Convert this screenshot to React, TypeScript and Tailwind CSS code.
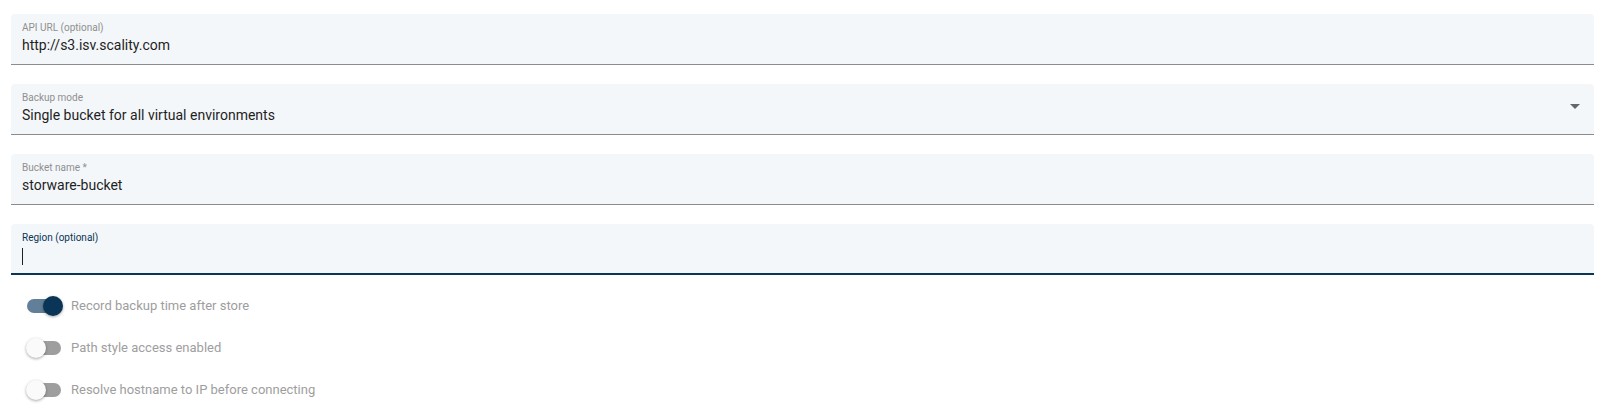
import React from "react";

function Field({
  label,
  value,
  focused = false,
  select = false,
}: {
  label: string;
  value?: string;
  focused?: boolean;
  select?: boolean;
}) {
  return (
    <div
      className={`relative bg-[#f4f7fa] rounded-t-[4px] h-[51px] ${
        focused ? "border-b-2 border-[#0b3556]" : "border-b border-[#8c8c8c]"
      }`}
    >
      <div
        className={`absolute left-[11px] top-[8px] text-[10px] leading-[12px] ${
          focused ? "text-[#0b3556]" : "text-[#8f8f8f]"
        }`}
      >
        {label}
      </div>
      <div className="absolute left-[11px] top-[21px] text-[14px] leading-[20px] text-[#1f1f1f]">
        {focused ? <span className="inline-block w-px h-[17px] bg-[#1f1f1f] align-middle mt-[1px]" /> : value}
      </div>
      {select && (
        <svg
          className="absolute right-[14px] top-[20px]"
          width="10"
          height="5"
          viewBox="0 0 10 5"
        >
          <path d="M0 0 L10 0 L5 5 Z" fill="#666" />
        </svg>
      )}
    </div>
  );
}

function Toggle({ on, label }: { on: boolean; label: string }) {
  return (
    <div className="flex items-center h-[42px]">
      <div className="relative w-[34px] h-[14px] ml-[27px] mr-[10px]">
        <div
          className={`absolute inset-0 rounded-full ${on ? "bg-[#617f98]" : "bg-[#9e9e9e]"}`}
        />
        <div
          className={`absolute top-[-3px] w-[20px] h-[20px] rounded-full ${
            on ? "left-[16px] bg-[#0b3556]" : "left-[-1px] bg-[#fafafa]"
          } shadow-[0_1px_3px_rgba(0,0,0,0.35)]`}
        />
      </div>
      <span className="text-[13px] text-[#9e9e9e]">{label}</span>
    </div>
  );
}

export default function App() {
  return (
    <div
      className="w-[1600px] h-[405px] bg-white overflow-hidden"
      style={{ fontFamily: "Roboto, 'Noto Sans', sans-serif" }}
    >
      <div className="pl-[11px] pr-[6px] pt-[14px] flex flex-col gap-[19px]">
        <Field label="API URL (optional)" value="http://s3.isv.scality.com" />
        <Field label="Backup mode" value="Single bucket for all virtual environments" select />
        <Field label="Bucket name *" value="storware-bucket" />
        <Field label="Region (optional)" focused />
      </div>
      <div className="pt-[10px] flex flex-col">
        <Toggle on label="Record backup time after store" />
        <Toggle on={false} label="Path style access enabled" />
        <Toggle on={false} label="Resolve hostname to IP before connecting" />
      </div>
    </div>
  );
}
